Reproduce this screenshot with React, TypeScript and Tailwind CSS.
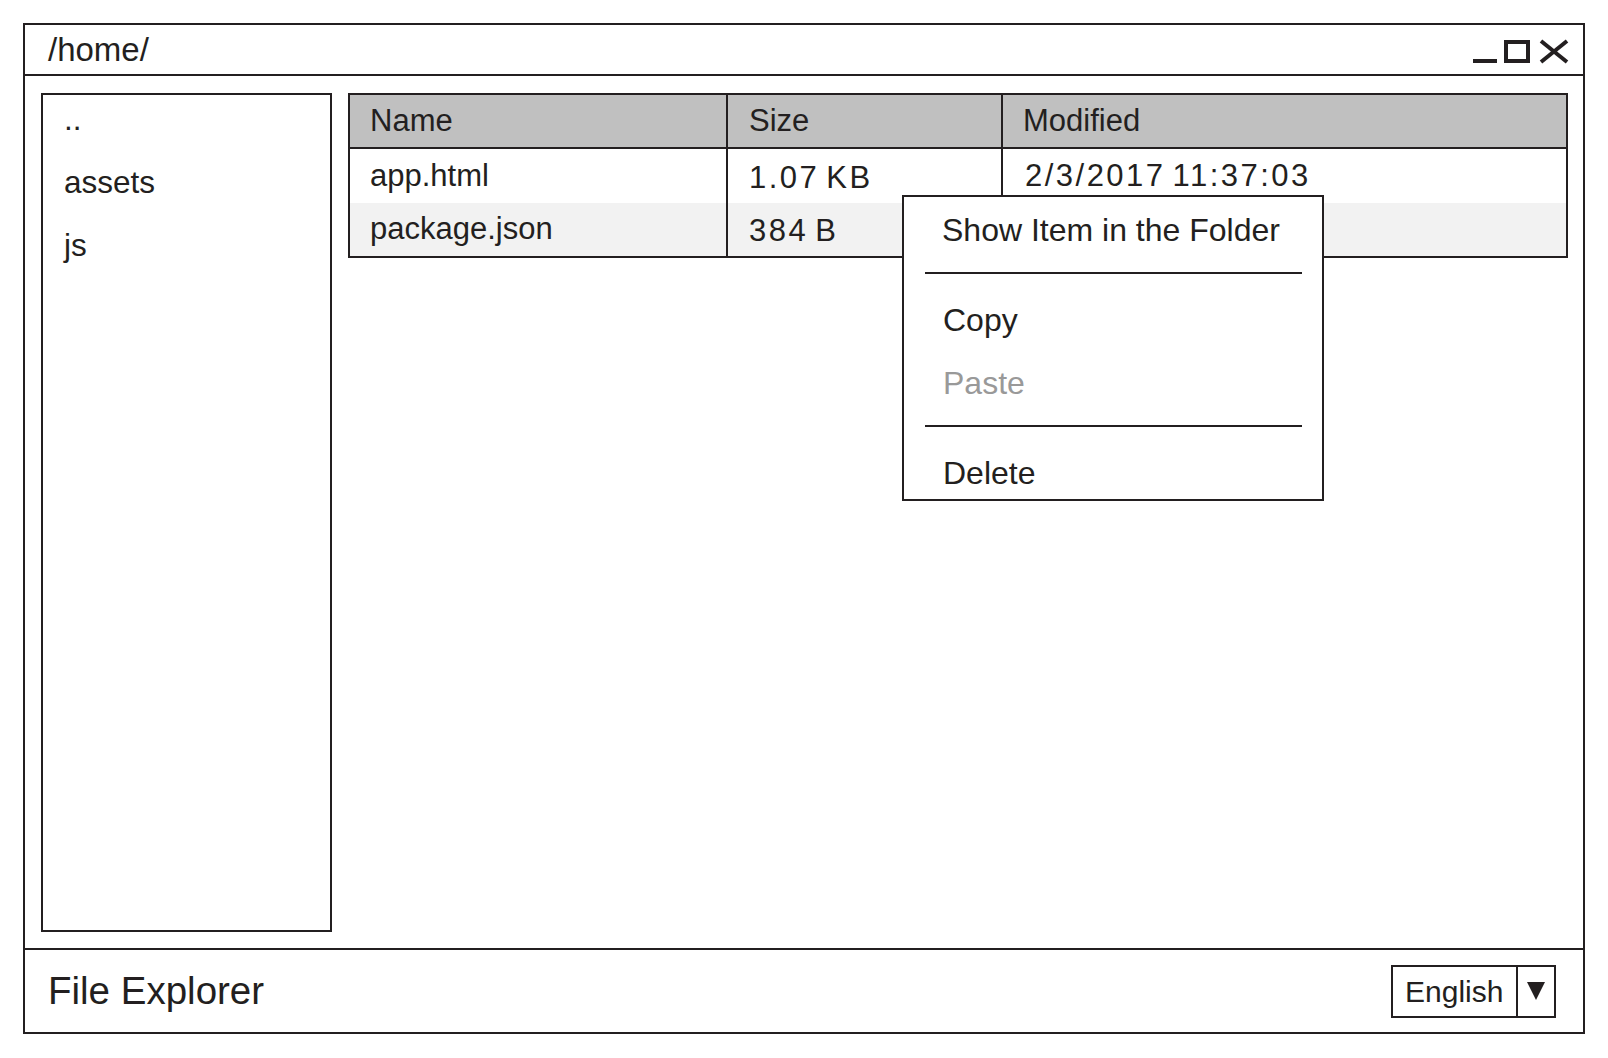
import React from 'react'

const ink = '#231f20'

function WindowControls() {
  return (
    <svg width="100" height="30" viewBox="0 0 100 30" className="mt-[3px]">
      <rect x="3" y="23" width="24" height="4" fill={ink} />
      <rect x="36" y="6" width="22" height="19" fill="none" stroke={ink} strokeWidth="4" />
      <line x1="71" y1="5" x2="97" y2="26" stroke={ink} strokeWidth="4" />
      <line x1="97" y1="5" x2="71" y2="26" stroke={ink} strokeWidth="4" />
    </svg>
  )
}

const rows = [
  { name: 'app.html', size: '1.07 KB', modified: '2/3/2017 11:37:03', h: 'h-[54px]', bg: 'bg-white' },
  { name: 'package.json', size: '384 B', modified: '', h: 'h-[53px]', bg: 'bg-[#f2f2f2]' },
]

function FileTable() {
  return (
    <div className="self-start flex-1 border-2 border-[#231f20] text-[31px] text-[#231f20]">
      <div className="grid grid-cols-[376px_275px_1fr] h-[54px] bg-[#c0c0c0] border-b-2 border-[#231f20] leading-[52px]">
        <div className="px-[20px]">Name</div>
        <div className="px-[21px] border-l-2 border-[#231f20]">Size</div>
        <div className="px-[20px] border-l-2 border-[#231f20]">Modified</div>
      </div>
      {rows.map((r) => (
        <div key={r.name} className={`grid grid-cols-[376px_275px_1fr] ${r.h} ${r.bg}`}>
          <div className="px-[20px] flex items-center">{r.name}</div>
          <div className="px-[21px] flex items-center border-l-2 border-[#231f20] tracking-[0.08em] [word-spacing:-4px] pt-[4px]">
            {r.size}
          </div>
          <div className="px-[22px] flex items-center border-l-2 border-[#231f20] tracking-[0.08em] [word-spacing:-4px]">
            {r.modified}
          </div>
        </div>
      ))}
    </div>
  )
}

function ContextMenu() {
  return (
    <div className="absolute left-[902px] top-[195px] w-[422px] bg-white border-2 border-[#231f20] text-[32px] text-[#231f20] pt-[13px] pb-[6px]">
      <div className="pl-[38px] leading-[40px]">Show Item in the Folder</div>
      <div className="mt-[22px] ml-[21px] mr-[20px] h-[2px] bg-[#231f20]" />
      <div className="mt-[26px] pl-[39px] leading-[40px]">Copy</div>
      <div className="mt-[23px] pl-[39px] leading-[40px] text-[#999999]">Paste</div>
      <div className="mt-[22px] ml-[21px] mr-[20px] h-[2px] bg-[#231f20]" />
      <div className="mt-[26px] pl-[39px] leading-[40px]">Delete</div>
    </div>
  )
}

export default function App() {
  return (
    <div
      className="relative w-[1608px] h-[1058px] bg-white overflow-hidden text-[#231f20]"
      style={{ fontFamily: '"Liberation Sans", Arial, sans-serif' }}
    >
      <div className="absolute left-[23px] top-[23px] w-[1562px] h-[1011px] border-2 border-[#231f20] flex flex-col">
        {/* title bar */}
        <div className="h-[51px] border-b-2 border-[#231f20] flex items-center justify-between pl-[23px] pr-[13px]">
          <span className="text-[33px] leading-[49px]">/home/</span>
          <WindowControls />
        </div>

        {/* body */}
        <div className="flex-1 flex gap-[16px] pt-[17px] pb-[16px] pl-[16px] pr-[15px]">
          <div className="w-[291px] border-2 border-[#231f20] pt-[4px] pl-[21px] flex flex-col gap-[23px] text-[31.5px]">
            <div className="leading-[40px]">..</div>
            <div className="leading-[40px]">assets</div>
            <div className="leading-[40px]">js</div>
          </div>
          <FileTable />
        </div>

        {/* footer */}
        <div className="h-[84px] border-t-2 border-[#231f20] flex items-center justify-between pl-[23px] pr-[27px]">
          <span className="text-[38.5px]">File Explorer</span>
          <div className="flex h-[53px] border-2 border-[#231f20]">
            <div className="w-[123px] pl-[12px] flex items-center text-[30px]">English</div>
            <div className="w-[38px] border-l-2 border-[#231f20] flex items-center justify-center">
              <svg width="18" height="18" viewBox="0 0 18 18">
                <polygon points="0,0 18,0 9,18" fill={ink} />
              </svg>
            </div>
          </div>
        </div>
      </div>
      <ContextMenu />
    </div>
  )
}
